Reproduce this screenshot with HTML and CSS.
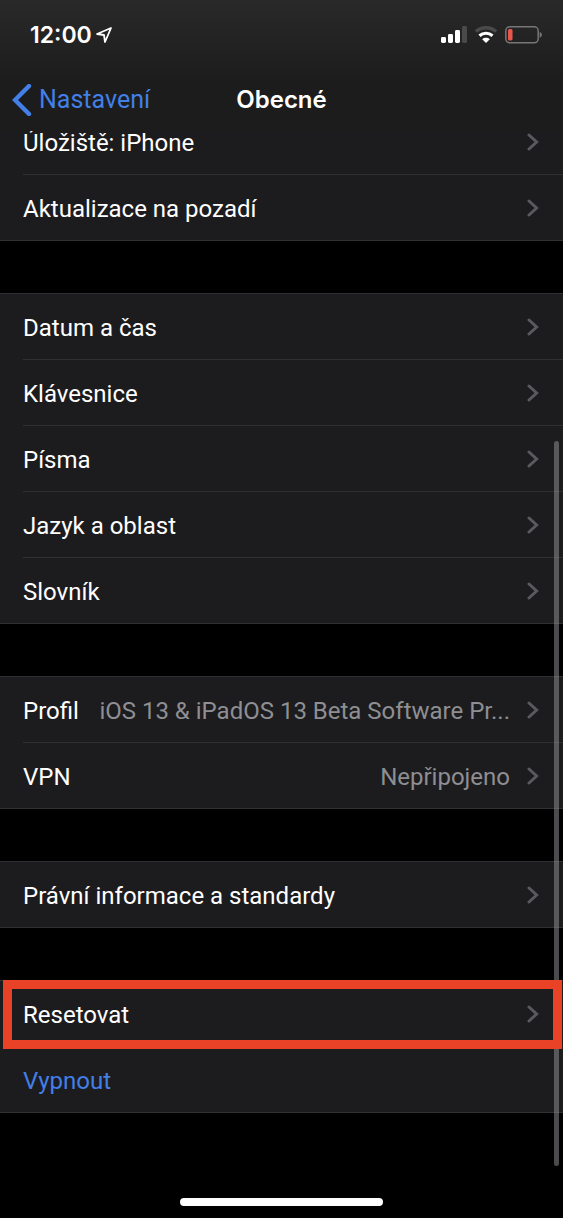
FILE: index.html
```html
<!DOCTYPE html>
<html lang="cs">
<head>
<meta charset="utf-8">
<meta name="viewport" content="width=device-width, initial-scale=1">
<title>Obecné</title>
<link rel="stylesheet" href="styles.css">
</head>
<body>
<svg class="defs" aria-hidden="true">
  <symbol id="chevron" viewBox="0 0 12 18"><path d="M2 2L9.6 9L2 16" fill="none" stroke="currentColor" stroke-width="3" stroke-linecap="round" stroke-linejoin="miter"/></symbol>
</svg>
<div class="screen">
  <header class="header">
    <div class="status">
      <div class="status-side">
        <span class="time">12:00</span>
        <svg class="location" viewBox="0 0 18 18" width="18" height="18" aria-hidden="true"><path d="M16 2L2 8L9 9L10 16Z" fill="none" stroke="currentColor" stroke-width="1.8" stroke-linejoin="round"/></svg>
      </div>
      <div class="status-side">
        <svg class="signal" viewBox="0 0 26 18" width="26" height="18" aria-hidden="true">
          <rect x="0" y="11" width="5" height="6" rx="1.4" fill="#fff"/>
          <rect x="7" y="8" width="5" height="9" rx="1.4" fill="#fff"/>
          <rect x="14" y="4" width="5" height="13" rx="1.4" fill="#fff"/>
          <rect x="21" y="0" width="5" height="17" rx="1.4" fill="#4a4a4b"/>
        </svg>
        <svg class="wifi" viewBox="0 0 24 18" width="24" height="18" aria-hidden="true">
          <path d="M1.8 5.6C7.6 .4 16.4 .4 22.2 5.6" fill="none" stroke="#4a4a4b" stroke-width="3.4"/>
          <path d="M5.5 9.7C9.2 6.4 14.8 6.4 18.5 9.7" fill="none" stroke="#fff" stroke-width="3.2"/>
          <path d="M12 17L8.2 13.2C10.4 11.3 13.6 11.3 15.8 13.2Z" fill="#fff"/>
        </svg>
        <svg class="battery" viewBox="0 0 38 18" width="38" height="18" aria-hidden="true">
          <rect x=".8" y=".8" width="32.4" height="16" rx="4" fill="none" stroke="#777778" stroke-width="1.5"/>
          <rect x="3" y="3" width="4.5" height="11.5" rx="1.5" fill="#e9564c"/>
          <path d="M34.7 6C37.6 6.6 37.6 11 34.7 11.6Z" fill="#777778"/>
        </svg>
      </div>
    </div>
    <nav class="nav">
      <a class="back" href="#">
        <svg viewBox="0 0 20 32" width="20" height="32" aria-hidden="true"><path d="M17 2L3 16L17 30" fill="none" stroke="currentColor" stroke-width="4.4" stroke-linecap="round"/></svg>
        <span>Nastavení</span>
      </a>
      <h1 class="title">Obecné</h1>
    </nav>
  </header>
  <main class="list">
    <section class="group">
      <a class="row" href="#"><span class="label">Úložiště: iPhone</span><svg class="chevron"><use href="#chevron"/></svg></a>
      <a class="row" href="#"><span class="label">Aktualizace na pozadí</span><svg class="chevron"><use href="#chevron"/></svg></a>
    </section>
    <section class="group">
      <a class="row" href="#"><span class="label">Datum a čas</span><svg class="chevron"><use href="#chevron"/></svg></a>
      <a class="row" href="#"><span class="label">Klávesnice</span><svg class="chevron"><use href="#chevron"/></svg></a>
      <a class="row" href="#"><span class="label">Písma</span><svg class="chevron"><use href="#chevron"/></svg></a>
      <a class="row" href="#"><span class="label">Jazyk a oblast</span><svg class="chevron"><use href="#chevron"/></svg></a>
      <a class="row" href="#"><span class="label">Slovník</span><svg class="chevron"><use href="#chevron"/></svg></a>
    </section>
    <section class="group">
      <a class="row" href="#"><span class="label">Profil</span><span class="value">iOS 13 &amp; iPadOS 13 Beta Software Pr...</span><svg class="chevron"><use href="#chevron"/></svg></a>
      <a class="row" href="#"><span class="label">VPN</span><span class="value">Nepřipojeno</span><svg class="chevron"><use href="#chevron"/></svg></a>
    </section>
    <section class="group">
      <a class="row" href="#"><span class="label">Právní informace a standardy</span><svg class="chevron"><use href="#chevron"/></svg></a>
    </section>
    <section class="group">
      <a class="row marked" href="#"><span class="label">Resetovat</span><svg class="chevron"><use href="#chevron"/></svg></a>
      <button class="row action" type="button"><span class="label">Vypnout</span></button>
    </section>
  </main>
  <div class="scrollbar"></div>
  <div class="home"></div>
</div>
</body>
</html>
```
FILE: styles.css
```css
* { box-sizing: border-box; }

body {
  margin: 0;
  background: #000;
  color: #fff;
  font-family: Roboto, "Liberation Sans", sans-serif;
  font-size: 24px;
  line-height: 32px;
}

a { color: inherit; text-decoration: none; }

.defs { position: absolute; width: 0; height: 0; }

.screen {
  position: relative;
  display: flex;
  flex-direction: column;
  min-height: 100vh;
}

.header {
  position: sticky;
  top: 0;
  z-index: 2;
  height: 131px;
  background: linear-gradient(#29292a, #1c1c1d 65%, #1c1c1d);
}

.status {
  display: flex;
  justify-content: space-between;
  align-items: center;
  height: 70px;
  padding: 0 20px 0 30px;
}

.status-side { display: flex; align-items: center; gap: 7px; }
.time { font-size: 23px; font-weight: 600; font-family: Inter, sans-serif; }
.location { margin-left: -4px; }

.nav {
  display: grid;
  grid-template-columns: 1fr auto 1fr;
  align-items: center;
  height: 60px;
  padding: 0 12px;
}

.back {
  display: flex;
  align-items: center;
  gap: 7px;
  color: #427fe6;
  font-size: 25px;
}

.title {
  margin: 0;
  font-family: Inter, sans-serif;
  font-size: 24px;
  line-height: 32px;
  font-weight: 600;
}

.list {
  display: flex;
  flex-direction: column;
  gap: 52px;
  margin-top: -23px;
}

.group {
  background: #1c1c1e;
  border-bottom: 1px solid #303033;
  box-shadow: inset 0 1px #303033;
}

.row {
  position: relative;
  display: flex;
  align-items: center;
  width: 100%;
  height: 66px;
  padding: 4px 24px 0 23px;
}

.row + .row::before {
  content: "";
  position: absolute;
  top: 0;
  left: 23px;
  right: 0;
  border-top: 1px solid #303033;
}

.label { flex: none; }

.value {
  flex: 1;
  min-width: 0;
  margin-left: 14px;
  overflow: hidden;
  color: #8e8e93;
  text-align: right;
  text-overflow: ellipsis;
  white-space: nowrap;
}

.chevron {
  flex: none;
  width: 12px;
  height: 18px;
  margin: 0 0 2px auto;
  color: #5a5a5e;
}

.value + .chevron { margin-left: 17px; }

.action {
  border: 0;
  background: none;
  color: #427fe6;
  font: inherit;
  text-align: left;
}

.marked::after {
  content: "";
  position: absolute;
  z-index: 2;
  top: 0;
  bottom: -3px;
  left: 3px;
  right: 1px;
  border: 9px solid #ea4226;
}

.scrollbar {
  position: absolute;
  top: 441px;
  right: 4px;
  bottom: 52px;
  width: 5px;
  border-radius: 3px;
  background: rgba(150, 150, 154, 0.5);
}

.home {
  width: 36%;
  height: 8px;
  margin: auto auto 12px;
  border-radius: 4px;
  background: #fff;
}
```
